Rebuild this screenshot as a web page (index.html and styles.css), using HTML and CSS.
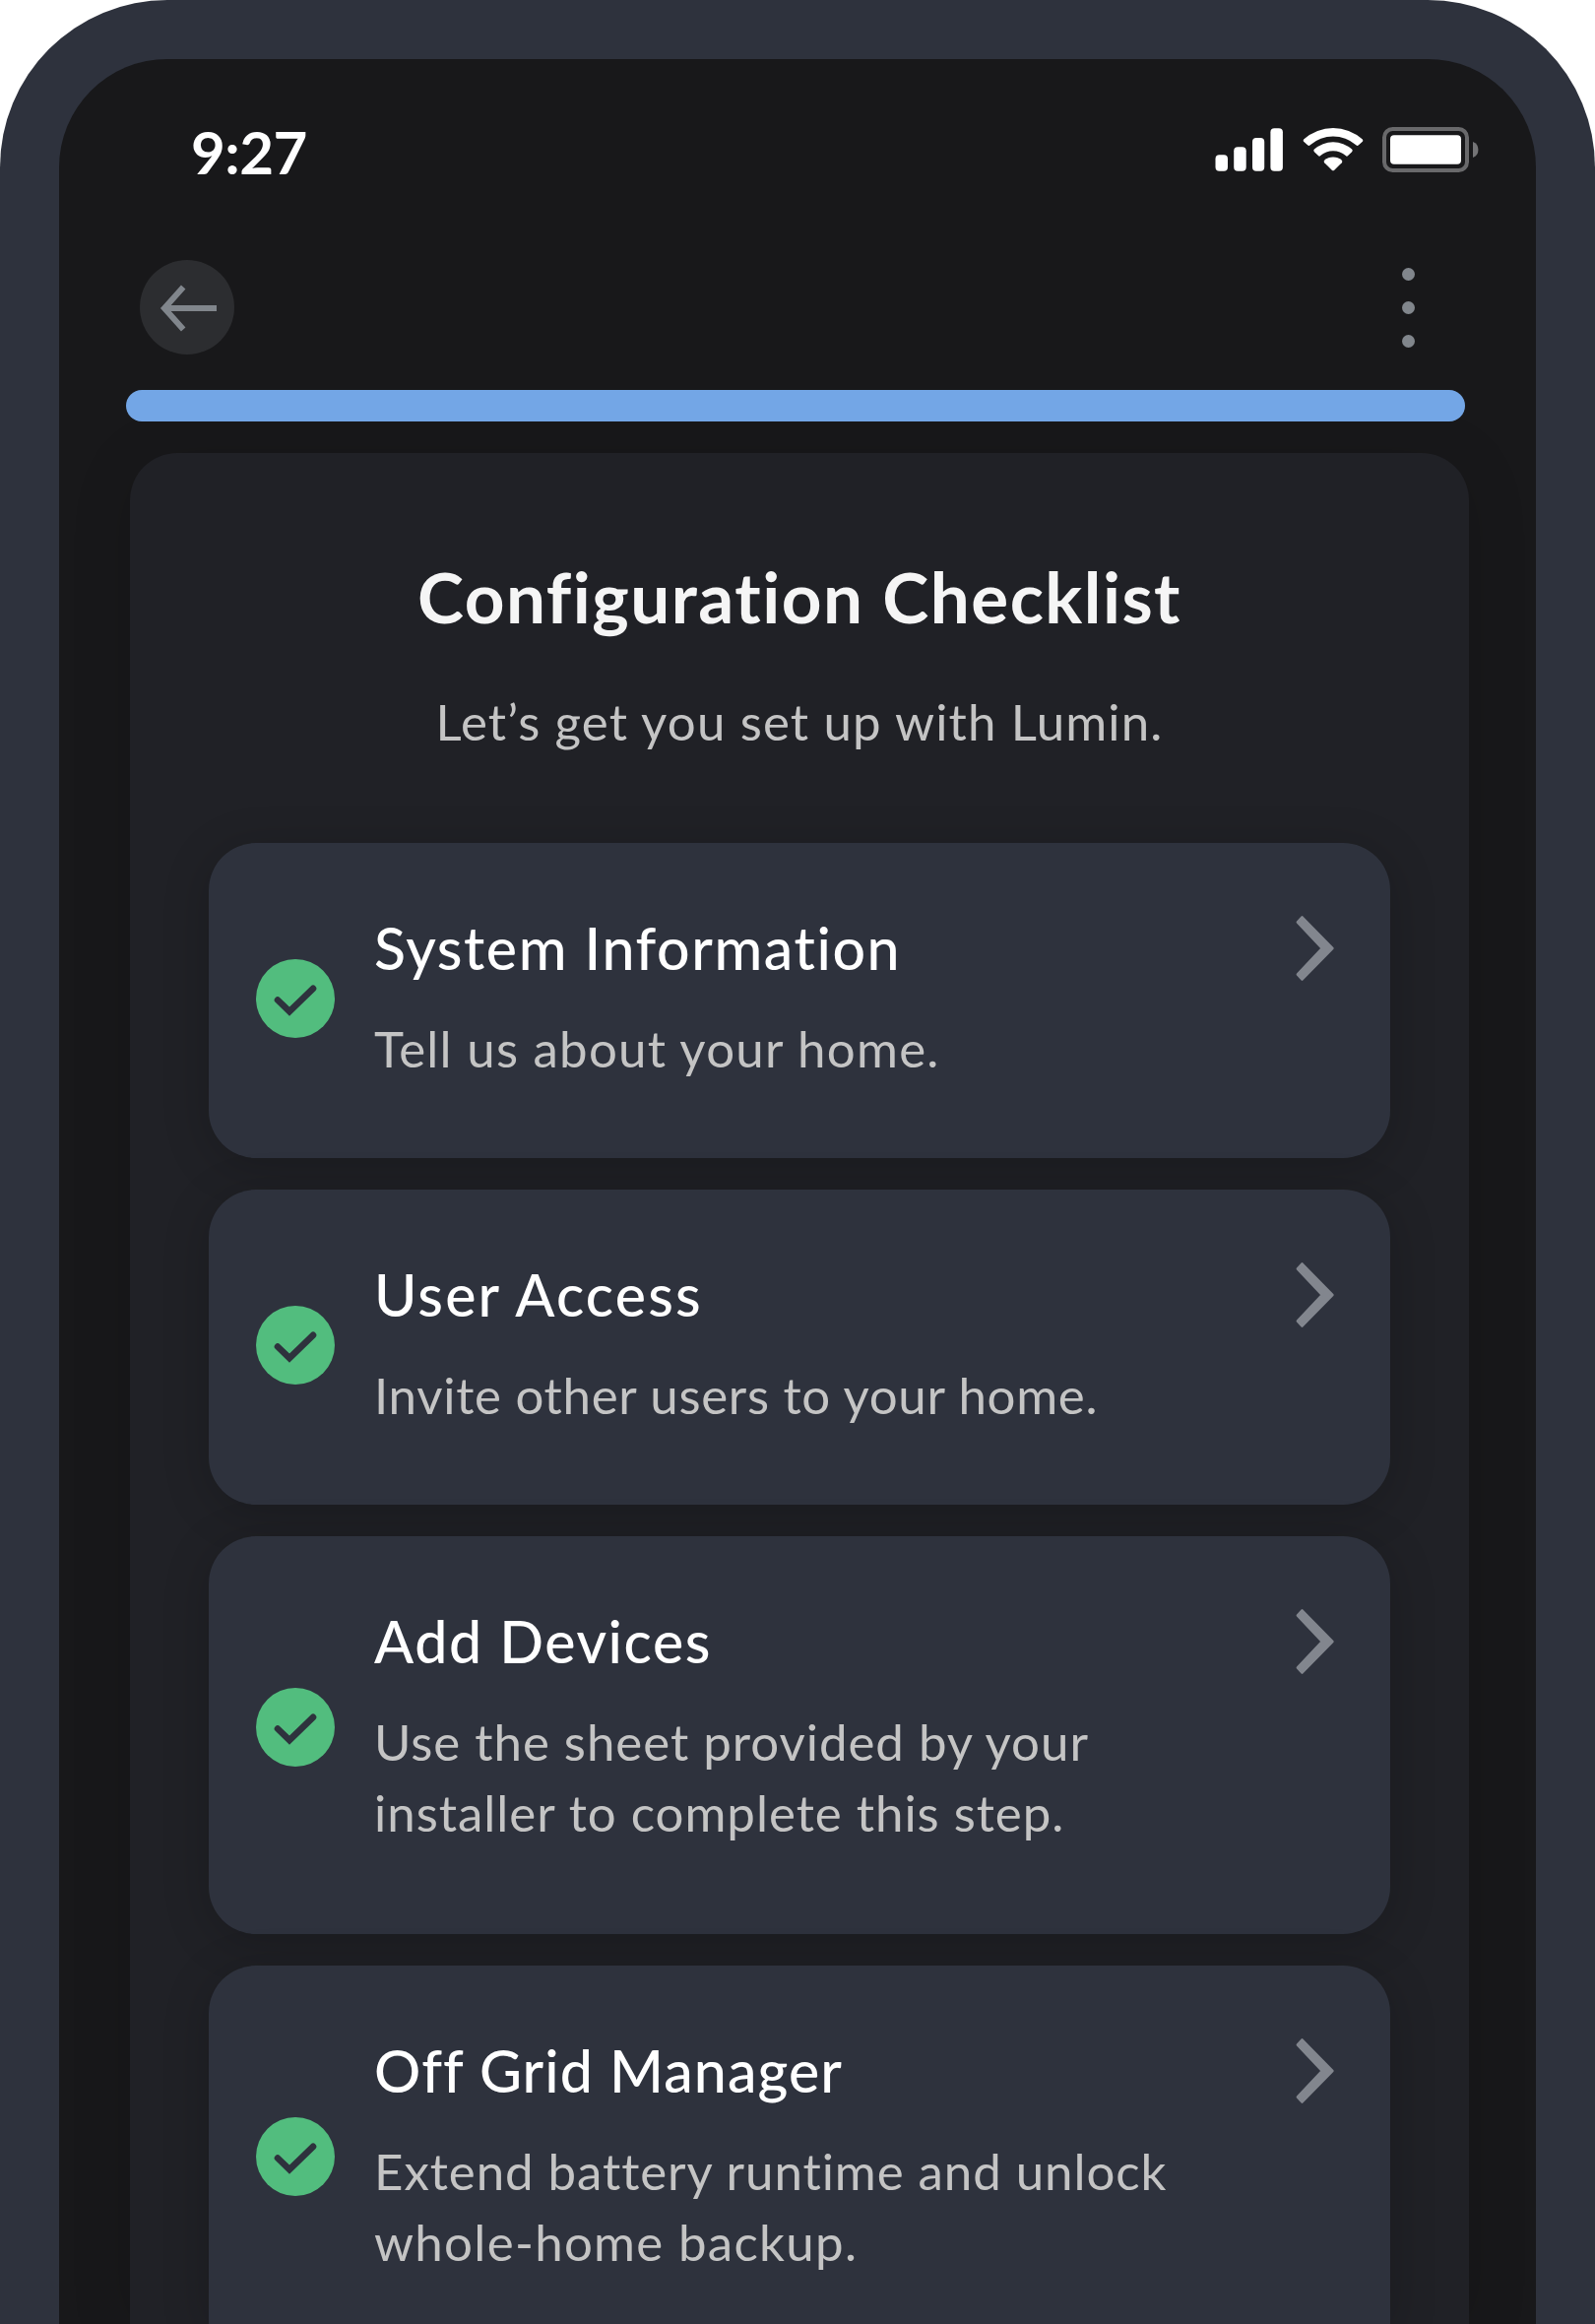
FILE: index.html
```html
<!DOCTYPE html>
<html lang="en">
<head>
	<title>Configuration Checklist</title>
	<meta charset="utf-8">
	<link rel="stylesheet" href="styles.css">
</head>
<body>

	<div class="phone">
		<div class="status-bar">
			<span class="time">9:27</span>
			<div class="status-icons">
				<svg class="signal" width="70" height="46" viewBox="0 0 70 46">
					<rect x="0.5" y="28.3" width="12.5" height="16.4" rx="4"/>
					<rect x="19.2" y="20.2" width="12.5" height="24.5" rx="4"/>
					<rect x="38" y="11" width="12.2" height="33.7" rx="4"/>
					<rect x="56.4" y="1.3" width="12.5" height="43.4" rx="4"/>
				</svg>
				<svg class="wifi" width="62" height="46" viewBox="0 0 62 46">
					<path d="M1.4 12.3 Q0 13.6 1.4 15 L5.3 18.4 Q6.5 19.4 7.7 18.3 A35.5 35.5 0 0 1 54.3 18.3 Q55.5 19.4 56.7 18.4 L60.6 15 Q62 13.6 60.6 12.3 A44.5 44.5 0 0 0 1.4 12.3 Z"/>
					<path d="M11.9 22.6 Q10.5 24 11.9 25.2 L15.9 29 Q17 30.2 18.2 29.1 A19 19 0 0 1 43.8 29.1 Q45 30.2 46.1 29 L50.1 25.2 Q51.5 24 50.1 22.6 A28.5 28.5 0 0 0 11.9 22.6 Z"/>
					<path d="M22.2 33.8 Q21 35 22.2 36.2 L30 43.9 Q31 44.8 32 43.9 L39.8 36.2 Q41 35 39.8 33.8 A13.5 13.5 0 0 0 22.2 33.8 Z"/>
				</svg>
				<svg class="battery" width="98" height="46" viewBox="0 0 98 46">
					<rect class="battery-case" x="2" y="2" width="84" height="42" rx="8.5"/>
					<rect x="8" y="8.2" width="72" height="29.6" rx="4"/>
					<path class="battery-cap" d="M92 15 A8.6 8.6 0 0 1 92 31 Z"/>
				</svg>
			</div>
		</div>

		<div class="nav">
			<div class="back">
				<svg width="96" height="96" viewBox="0 0 96 96">
					<path d="M78 49 H25 M44.2 27.5 L25 49 L44.2 70.5"/>
				</svg>
			</div>
			<div class="more">
				<i></i>
				<i></i>
				<i></i>
			</div>
		</div>

		<div class="progress"></div>

		<div class="panel">
			<h1>Configuration Checklist</h1>
			<p class="intro">Let’s get you set up with Lumin.</p>

			<div class="item system">
				<svg class="check" viewBox="0 0 80 80"><circle cx="40" cy="40" r="40"/><path d="M22 41.5 L34 53.2 L58 29.8"/></svg>
				<div class="text">
					<h2>System Information</h2>
					<p>Tell us about your home.</p>
				</div>
				<svg class="chevron" viewBox="0 0 40 68"><path d="M6.5 2.7 L37.2 34 L6.5 65.3 L2.1 60.5 L27.1 34 L2.1 7.5 Z"/></svg>
			</div>

			<div class="item access">
				<svg class="check" viewBox="0 0 80 80"><circle cx="40" cy="40" r="40"/><path d="M22 41.5 L34 53.2 L58 29.8"/></svg>
				<div class="text">
					<h2>User Access</h2>
					<p>Invite other users to your home.</p>
				</div>
				<svg class="chevron" viewBox="0 0 40 68"><path d="M6.5 2.7 L37.2 34 L6.5 65.3 L2.1 60.5 L27.1 34 L2.1 7.5 Z"/></svg>
			</div>

			<div class="item tall devices">
				<svg class="check" viewBox="0 0 80 80"><circle cx="40" cy="40" r="40"/><path d="M22 41.5 L34 53.2 L58 29.8"/></svg>
				<div class="text">
					<h2>Add Devices</h2>
					<p>Use the sheet provided by your<br>installer to complete this step.</p>
				</div>
				<svg class="chevron" viewBox="0 0 40 68"><path d="M6.5 2.7 L37.2 34 L6.5 65.3 L2.1 60.5 L27.1 34 L2.1 7.5 Z"/></svg>
			</div>

			<div class="item tall manager">
				<svg class="check" viewBox="0 0 80 80"><circle cx="40" cy="40" r="40"/><path d="M22 41.5 L34 53.2 L58 29.8"/></svg>
				<div class="text">
					<h2>Off Grid Manager</h2>
					<p>Extend battery runtime and unlock<br><span class="last">whole-home backup.</span></p>
				</div>
				<svg class="chevron" viewBox="0 0 40 68"><path d="M6.5 2.7 L37.2 34 L6.5 65.3 L2.1 60.5 L27.1 34 L2.1 7.5 Z"/></svg>
			</div>
		</div>
	</div>

</body>
</html>
```
FILE: styles.css
```css
* {
	box-sizing: border-box;
}
body {
	margin: 0;
	background: #fff;
	font-family: Lato, "Open Sans", sans-serif;
}
h1, h2, p {
	margin: 0;
}
svg {
	display: block;
	flex: none;
}

/* upper part of the phone, open at the bottom */
.phone {
	width: 1620px;
	height: 2360px;
	border: 60px solid #2e323d;
	border-bottom: 0;
	border-radius: 170px 170px 0 0;
	background: #18181a;
	overflow: hidden;
}

.status-bar {
	display: flex;
	justify-content: space-between;
	height: 204px;
	padding: 58px 58px 0 134px;
}
.time {
	color: #fff;
	font-size: 60px;
	font-weight: 700;
	line-height: 72px;
	letter-spacing: -0.5px;
}
.status-icons {
	display: flex;
	height: 46px;
	margin-top: 11px;
	fill: #fff;
}
.wifi {
	margin-left: 19px;
}
.battery {
	margin-left: 19px;
}
.battery-case {
	fill: none;
	stroke: #69696b;
	stroke-width: 4;
}
.battery-cap {
	fill: #747476;
}

.nav {
	display: flex;
	justify-content: space-between;
	height: 132px;
	padding: 0 123px 0 82px;
}
.back {
	width: 96px;
	height: 96px;
	border-radius: 50%;
	background: #2c2d30;
}
.back path {
	fill: none;
	stroke: #81868c;
	stroke-width: 6;
}
.more {
	display: flex;
	flex-direction: column;
	gap: 21px;
	padding-top: 8px;
}
.more i {
	width: 13px;
	height: 13px;
	border-radius: 50%;
	background: #81868c;
}

.progress {
	/* above the shadow of the panel */
	position: relative;
	z-index: 1;
	width: 1360px;
	height: 32px;
	margin-left: 68px;
	border-radius: 16px;
	background: #73a6e6;
}

.panel {
	width: 1360px;
	height: 1900px;
	margin: 32px 0 0 72px;
	padding: 98px 80px 0;
	border-radius: 48px 48px 0 0;
	background: #202126;
	box-shadow: 0 8px 64px rgba(0, 0, 0, 0.12);
}
h1 {
	color: #f5f5f5;
	font-size: 71px;
	font-weight: 700;
	line-height: 96px;
	letter-spacing: 1.48px;
	text-align: center;
}
.intro {
	margin: 43px 0 87px;
	color: #c4c4c4;
	font-size: 51px;
	line-height: 72px;
	letter-spacing: 1.15px;
	text-align: center;
}

.item {
	display: flex;
	align-items: flex-start;
	height: 320px;
	margin-bottom: 32px;
	padding: 67px 56px 0 48px;
	border-radius: 48px;
	background: #2e323d;
	box-shadow: 0 8px 48px rgba(0, 0, 0, 0.2);
}
.item.tall {
	height: 404px;
}
.item.manager {
	height: 364px;
	margin-bottom: 0;
	border-radius: 48px 48px 0 0;
}
.check {
	width: 80px;
	height: 80px;
	margin-top: 51px;
}
.tall .check {
	margin-top: 87px;
}
.check circle {
	fill: #52bd7e;
}
.check path {
	fill: none;
	stroke: #2e323d;
	stroke-width: 6.6;
	stroke-linecap: round;
	stroke-linejoin: miter;
}
.text {
	flex: 1;
	padding-left: 40px;
}
h2 {
	color: #fff;
	font-size: 59px;
	font-weight: 500;
	line-height: 80px;
}
.text p {
	margin-top: 26px;
	color: #c4c4c4;
	font-size: 51px;
	line-height: 72px;
	white-space: nowrap;
}
.chevron {
	width: 40px;
	height: 68px;
	margin-top: 6px;
}
.chevron path {
	fill: #82868e;
	stroke: #82868e;
	stroke-width: 3;
	stroke-linejoin: round;
}

/* tracking */
.system h2 {
	letter-spacing: 1.6px;
}
.system p {
	letter-spacing: 1.25px;
}
.access h2 {
	letter-spacing: 2.2px;
}
.access p {
	letter-spacing: 0.7px;
}
.devices h2 {
	letter-spacing: 1.6px;
}
.devices p {
	letter-spacing: 0.97px;
}
.manager h2 {
	letter-spacing: 1.1px;
}
.manager p {
	letter-spacing: 0.93px;
}
.manager .last {
	letter-spacing: 1.3px;
}
```
